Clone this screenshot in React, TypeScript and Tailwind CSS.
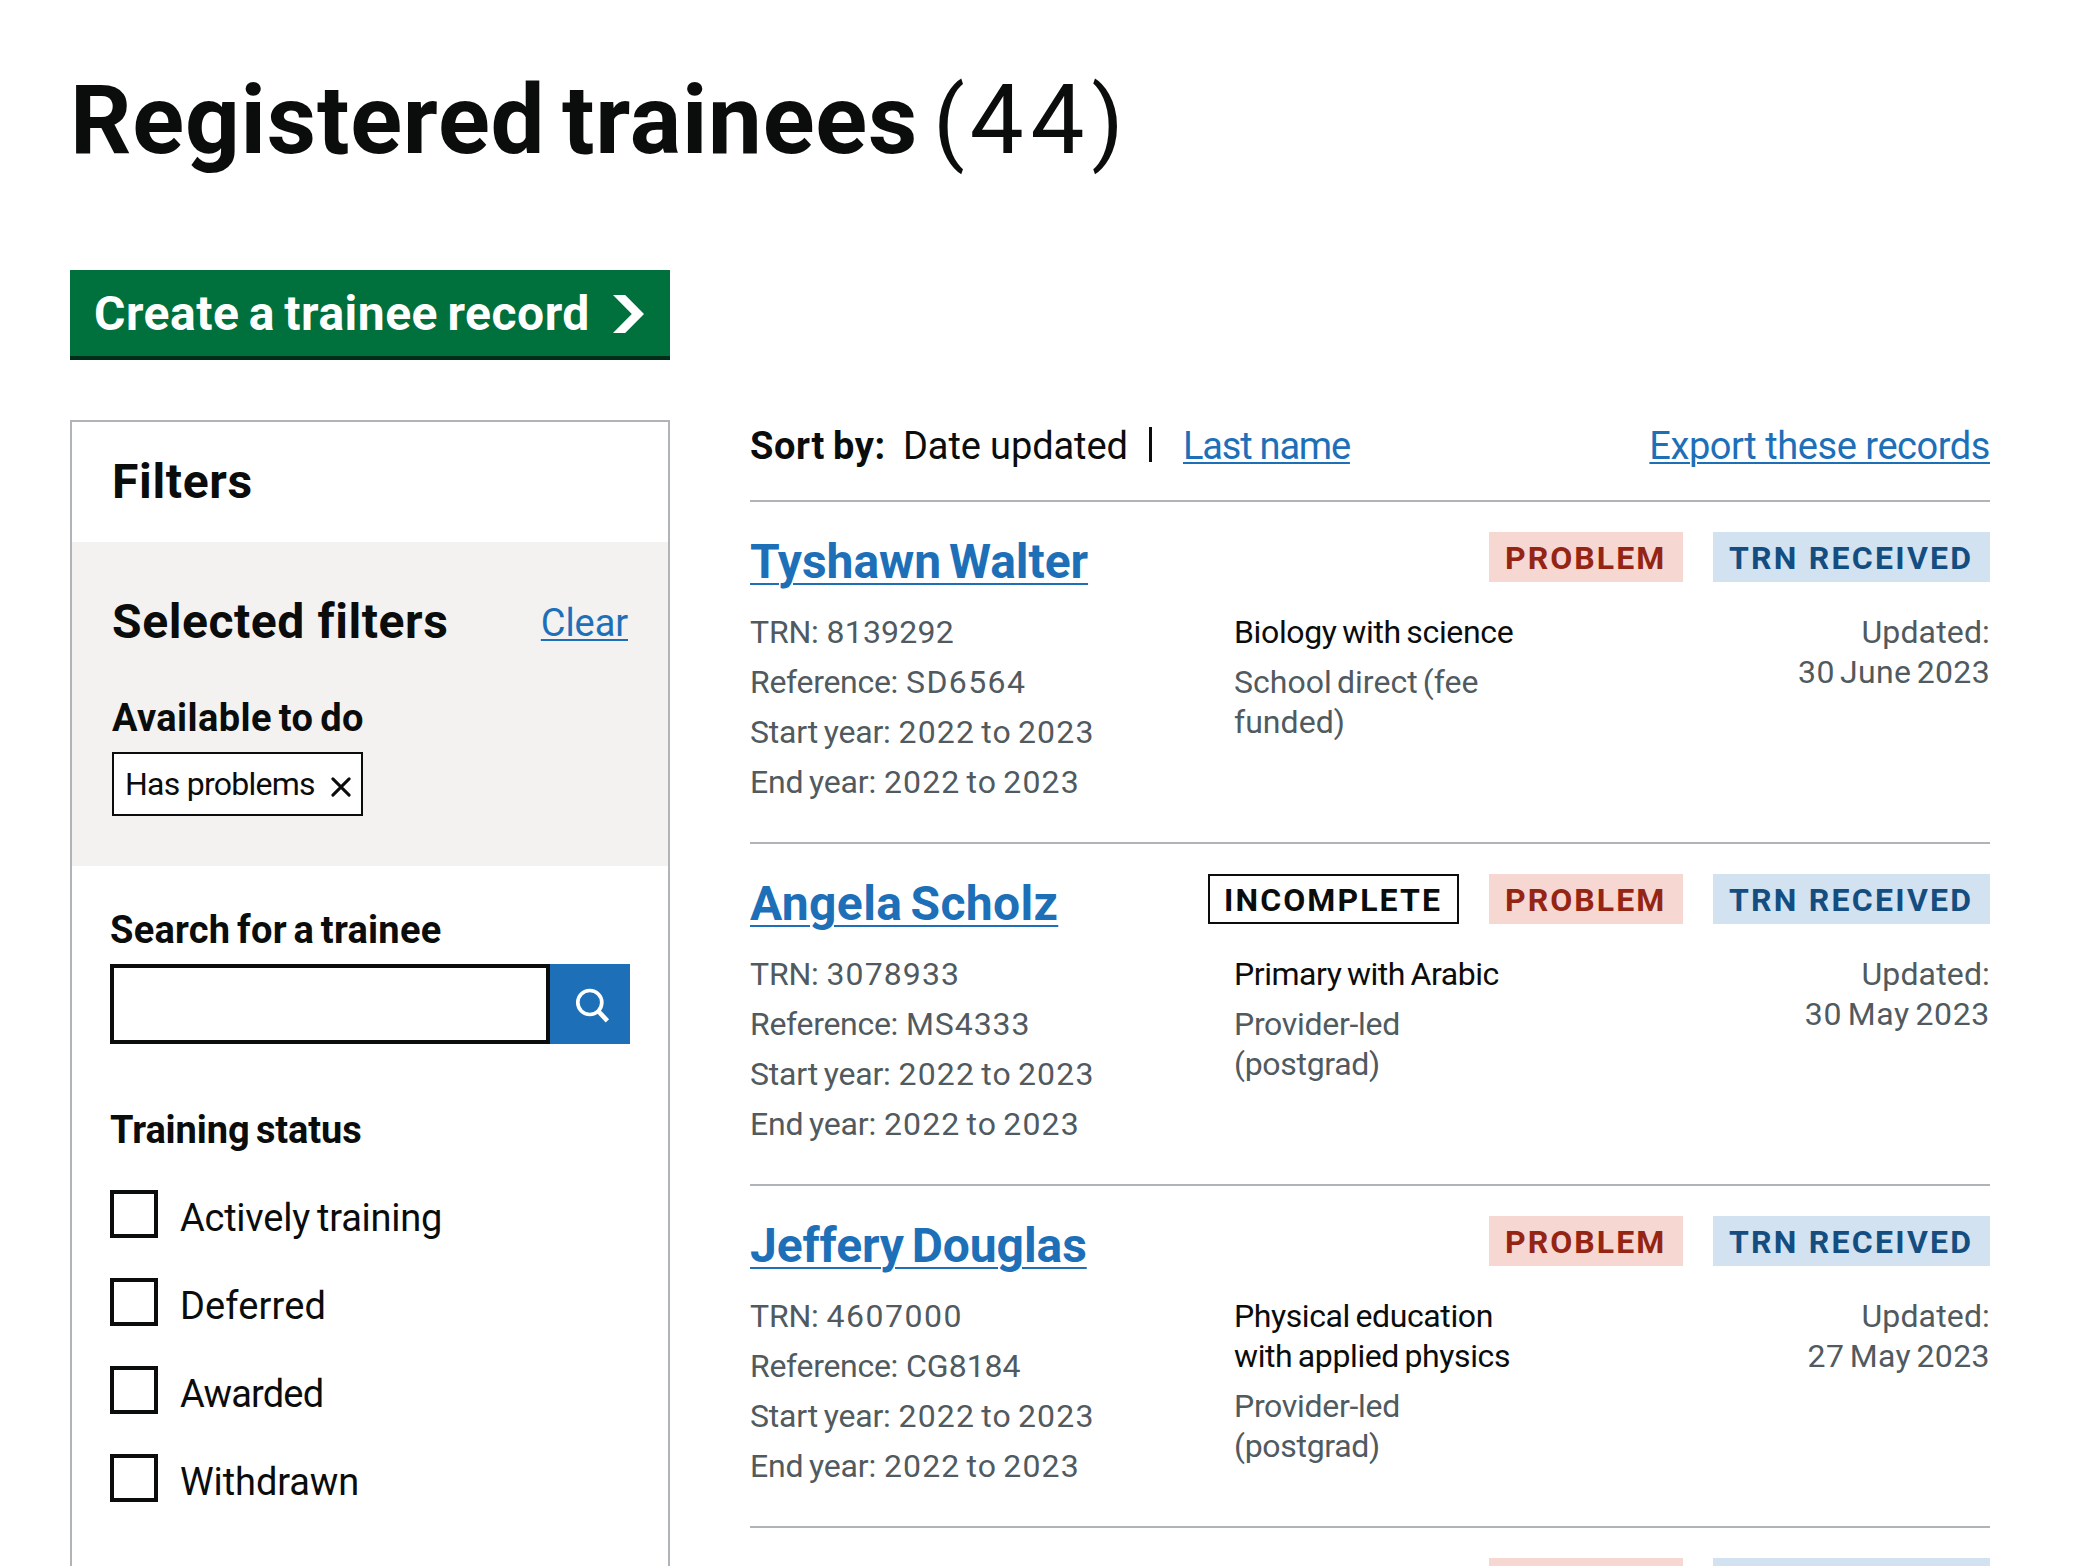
import React from "react";

type Tag = "incomplete" | "problem" | "received";

type Text = { text: string; spacing: string };

type Detail = { label: Text; value: Text };

type Trainee = {
  name: Text;
  tags: Tag[];
  details: Detail[];
  subject: Text;
  route: Text;
  updated: Text;
};

const trnLabel: Text = { text: "TRN:", spacing: "tracking-[-0.2px]" };
const referenceLabel: Text = { text: "Reference:", spacing: "tracking-[-0.3px]" };
const years: Text = { text: "2022 to 2023", spacing: "tracking-[1.15px] [word-spacing:-3px]" };
const startYear: Detail = {
  label: { text: "Start year:", spacing: "tracking-[-0.2px] [word-spacing:-2px]" },
  value: years,
};
const endYear: Detail = {
  label: { text: "End year:", spacing: "tracking-[-0.2px] [word-spacing:-2px]" },
  value: years,
};
const providerLed: Text = { text: "Provider-led (postgrad)", spacing: "tracking-[-0.3px]" };

const trainees: Trainee[] = [
  {
    name: { text: "Tyshawn Walter", spacing: "tracking-[-0.05px] [word-spacing:-4px]" },
    tags: ["problem", "received"],
    details: [
      { label: trnLabel, value: { text: "8139292", spacing: "tracking-[0.2px]" } },
      { label: referenceLabel, value: { text: "SD6564", spacing: "tracking-[1.4px]" } },
      startYear,
      endYear,
    ],
    subject: { text: "Biology with science", spacing: "tracking-[-0.35px] [word-spacing:-2px]" },
    route: { text: "School direct (fee funded)", spacing: "tracking-[0.05px] [word-spacing:-3px]" },
    updated: { text: "30 June 2023", spacing: "tracking-[0.35px] [word-spacing:-3px]" },
  },
  {
    name: { text: "Angela Scholz", spacing: "tracking-[0.35px] [word-spacing:-4px]" },
    tags: ["incomplete", "problem", "received"],
    details: [
      { label: trnLabel, value: { text: "3078933", spacing: "tracking-[1.1px]" } },
      { label: referenceLabel, value: { text: "MS4333", spacing: "tracking-[0.9px]" } },
      startYear,
      endYear,
    ],
    subject: { text: "Primary with Arabic", spacing: "tracking-[-0.45px] [word-spacing:-2px]" },
    route: providerLed,
    updated: { text: "30 May 2023", spacing: "tracking-[0.65px] [word-spacing:-3px]" },
  },
  {
    name: { text: "Jeffery Douglas", spacing: "tracking-[-0.1px] [word-spacing:-4px]" },
    tags: ["problem", "received"],
    details: [
      { label: trnLabel, value: { text: "4607000", spacing: "tracking-[1.5px]" } },
      { label: referenceLabel, value: { text: "CG8184", spacing: "tracking-normal" } },
      startYear,
      endYear,
    ],
    subject: {
      text: "Physical education with applied physics",
      spacing: "tracking-[-0.4px] [word-spacing:-2px]",
    },
    route: providerLed,
    updated: { text: "27 May 2023", spacing: "tracking-[0.4px] [word-spacing:-3px]" },
  },
];

const statuses: Text[] = [
  { text: "Actively training", spacing: "tracking-[-0.25px] [word-spacing:-2px]" },
  { text: "Deferred", spacing: "tracking-[0.13px]" },
  { text: "Awarded", spacing: "tracking-[-0.8px]" },
  { text: "Withdrawn", spacing: "tracking-[-0.1px]" },
];

function StatusTag({ tag }: { tag: Tag }) {
  if (tag === "incomplete") {
    return (
      <span className="h-[50px] w-[251px] border-2 border-[#0b0c0c] pl-[14px] leading-[48px] tracking-[2.1px]">
        INCOMPLETE
      </span>
    );
  }
  if (tag === "problem") {
    return (
      <span className="h-[50px] w-[194px] bg-[#f6d7d2] pl-4 leading-[52px] tracking-[2.05px] text-[#942514]">
        PROBLEM
      </span>
    );
  }
  return (
    <span className="h-[50px] w-[277px] bg-[#d2e2f1] pl-4 leading-[52px] tracking-[2.25px] text-[#144e81]">
      TRN RECEIVED
    </span>
  );
}

function Record({ trainee }: { trainee: Trainee }) {
  return (
    <li className="h-[342px] border-t-2 border-[#b1b4b6] pt-[30px]">
      <div className="flex h-20 items-start justify-between">
        <h3 className="pt-[5px] text-[48px] leading-[50px] font-bold">
          <a
            href="#"
            className={`text-[#1d70b8] underline decoration-2 underline-offset-[5px] ${trainee.name.spacing}`}
          >
            {trainee.name.text}
          </a>
        </h3>
        <div className="flex gap-[30px] text-[32px] font-bold whitespace-nowrap">
          {trainee.tags.map((tag) => (
            <StatusTag key={tag} tag={tag} />
          ))}
        </div>
      </div>
      <div className="flex text-[32px] leading-10 text-[#505a5f]">
        <div className="flex w-[484px] flex-col gap-2.5">
          {trainee.details.map((d) => (
            <p key={d.label.text}>
              <span className={d.label.spacing}>{d.label.text}</span>{" "}
              <span className={d.value.spacing}>{d.value.text}</span>
            </p>
          ))}
        </div>
        <div className="flex w-[290px] flex-col gap-2.5">
          <p className={`text-[#0b0c0c] ${trainee.subject.spacing}`}>{trainee.subject.text}</p>
          <p className={trainee.route.spacing}>{trainee.route.text}</p>
        </div>
        <div className="grow text-right">
          <p className="tracking-[0.15px]">Updated:</p>
          <p className={trainee.updated.spacing}>{trainee.updated.text}</p>
        </div>
      </div>
    </li>
  );
}

function FilterPanel() {
  return (
    <aside className="w-[600px] border-2 border-[#b1b4b6]">
      <div className="h-[120px] px-10 pt-[35px]">
        <h2 className="text-[48px] leading-[50px] font-bold tracking-[0.67px]">Filters</h2>
      </div>
      <div className="h-[324px] bg-[#f3f2f1] px-10 pt-[55px]">
        <div className="flex items-start justify-between">
          <h3 className="text-[48px] leading-[50px] font-bold tracking-[0.58px]">Selected filters</h3>
          <a
            href="#"
            className="mt-px text-[38px] leading-[50px] tracking-[-0.1px] text-[#1d70b8] underline decoration-2 underline-offset-[3px]"
          >
            Clear
          </a>
        </div>
        <h4 className="mt-[45px] text-[38px] leading-[50px] font-bold tracking-[0.4px] [word-spacing:-3px]">
          Available to do
        </h4>
        <a
          href="#"
          className="mt-[9px] flex h-16 w-[251px] items-start justify-between border-2 border-[#0b0c0c] bg-white pr-2.5 pl-[11px]"
        >
          <span className="text-[32px] leading-[60px] tracking-[-0.75px]">Has problems</span>
          <svg className="mt-[23px] h-5 w-5" viewBox="0 0 20 20" fill="none" stroke="#0b0c0c" strokeWidth="3" strokeLinecap="round">
            <path d="M1.9 1.9 18.1 18.1M18.1 1.9 1.9 18.1" />
          </svg>
        </a>
      </div>
      <div className="px-[38px] pt-[39px]">
        <label
          htmlFor="search"
          className="block text-[38px] leading-[50px] font-bold tracking-[0.25px] [word-spacing:-3px]"
        >
          Search for a trainee
        </label>
        <div className="mt-[9px] flex">
          <input id="search" className="h-20 w-[440px] border-4 border-[#0b0c0c] bg-white" />
          <button className="h-20 w-20 bg-[#1d70b8]" aria-label="Search">
            <svg className="h-20 w-20" viewBox="0 0 80 80" fill="none" stroke="#fff">
              <circle cx="39.8" cy="38.5" r="12" strokeWidth="3.7" />
              <path d="M48.2 47.2 57.4 56.8" strokeWidth="4.6" />
            </svg>
          </button>
        </div>
        <h3 className="mt-[61px] text-[38px] leading-[50px] font-bold tracking-[-0.1px] [word-spacing:-3px]">
          Training status
        </h3>
        <div className="mt-[35px] flex flex-col gap-10">
          {statuses.map((s) => (
            <label key={s.text} className="flex h-12 items-start">
              <input type="checkbox" className="h-12 w-12 appearance-none border-4 border-[#0b0c0c] bg-white" />
              <span className={`ml-[22px] text-[38px] leading-[56px] ${s.spacing}`}>{s.text}</span>
            </label>
          ))}
        </div>
      </div>
    </aside>
  );
}

export default function App() {
  return (
    <div className="h-[1566px] w-[2076px] overflow-hidden bg-white px-[70px] pt-[70px] font-['Roboto',sans-serif] text-[#0b0c0c]">
      <h1 className="flex h-[100px] items-baseline text-[96px] leading-[100px] font-bold tracking-[0.8px] [word-spacing:-8px]">
        Registered trainees
        <span className="ml-[15px] font-normal">
          <span className="text-[92px] tracking-[5px]">(</span>
          <span className="tracking-[7px]">44</span>
          <span className="text-[92px]">)</span>
        </span>
      </h1>
      <button className="mt-[100px] flex h-[90px] w-[600px] items-start border-b-4 border-[#002d18] bg-[#00703c] pl-6 text-white">
        <span className="pt-[19px] text-[48px] leading-[50px] font-bold tracking-[0.5px] [word-spacing:-3px]">
          Create a trainee record
        </span>
        <svg className="mt-[25px] ml-[23px] h-[38px] w-[31px]" viewBox="0 0 33 40" preserveAspectRatio="none" fill="#fff">
          <path d="M0 0h13l20 20-20 20H0l20-20z" />
        </svg>
      </button>
      <div className="mt-[60px] flex h-[1300px] gap-20">
        <FilterPanel />
        <main className="w-[1240px]">
          <div className="flex h-20 items-start pt-px text-[38px] leading-[50px]">
            <span className="w-[153px] font-bold tracking-[0.6px] [word-spacing:-2px]">Sort by:</span>
            <span className="w-[246px] tracking-[-0.1px]">Date updated</span>
            <span className="mt-[6px] mr-[31px] h-[35px] w-[3px] bg-[#0b0c0c]" />
            <a
              href="#"
              className="tracking-[-1.2px] text-[#1d70b8] underline decoration-2 underline-offset-[3px]"
            >
              Last name
            </a>
            <a
              href="#"
              className="ml-auto tracking-[-0.45px] text-[#1d70b8] underline decoration-2 underline-offset-[3px]"
            >
              Export these records
            </a>
          </div>
          <ul>
            {trainees.map((t) => (
              <Record key={t.name.text} trainee={t} />
            ))}
            <li className="flex justify-end gap-[30px] border-t-2 border-[#b1b4b6] pt-[30px]">
              <span className="h-[50px] w-[194px] bg-[#f6d7d2]" />
              <span className="h-[50px] w-[277px] bg-[#d2e2f1]" />
            </li>
          </ul>
        </main>
      </div>
    </div>
  );
}
